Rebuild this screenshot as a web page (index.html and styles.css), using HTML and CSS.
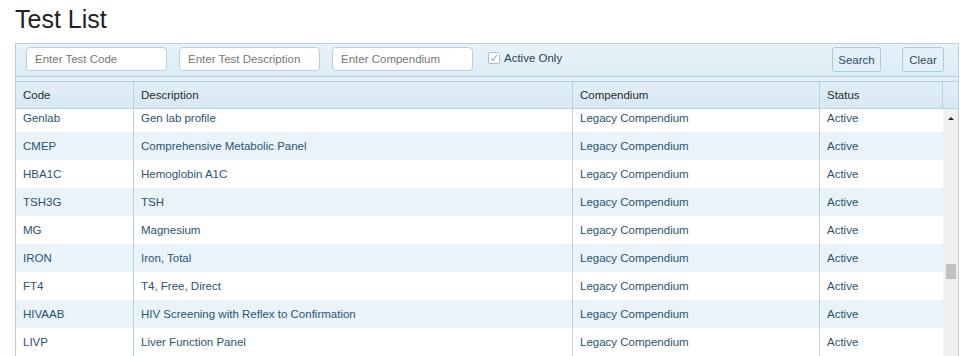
FILE: index.html
```html
<!DOCTYPE html>
<html lang="en">
<head>
  <meta charset="UTF-8">
  <title>Test List</title>
  <link rel="stylesheet" href="styles.css">
</head>
<body>
  <h1>Test List</h1>

  <!-- Test list panel -->
  <div class="panel">
    <div class="toolbar">
      <input class="field" type="text" placeholder="Enter Test Code">
      <input class="field" type="text" placeholder="Enter Test Description">
      <input class="field" type="text" placeholder="Enter Compendium">
      <label class="active-only">
        <svg class="check" width="12" height="12" viewBox="0 0 12 12">
          <rect x="0.5" y="0.5" width="11" height="11" rx="1" fill="#fff" stroke="#a9bfcc"/>
          <path d="M3 6.2 L5 8.8 L9 2.6" fill="none" stroke="#8a9aa5" stroke-width="1"/>
        </svg>
        Active Only
      </label>
      <div class="actions">
        <button class="btn search">Search</button>
        <button class="btn clear">Clear</button>
      </div>
    </div>

    <div class="spacer"></div>

    <!-- Column headers -->
    <div class="head">
      <div class="cell">Code</div>
      <div class="cell">Description</div>
      <div class="cell">Compendium</div>
      <div class="cell">Status</div>
      <div class="cell gutter"></div>
    </div>

    <!-- Rows + scrollbar -->
    <div class="grid-body">
      <div class="rows">
        <div class="row"><div class="cell">Genlab</div><div class="cell">Gen lab profile</div><div class="cell">Legacy Compendium</div><div class="cell">Active</div></div>
        <div class="row alt"><div class="cell">CMEP</div><div class="cell">Comprehensive Metabolic Panel</div><div class="cell">Legacy Compendium</div><div class="cell">Active</div></div>
        <div class="row"><div class="cell">HBA1C</div><div class="cell">Hemoglobin A1C</div><div class="cell">Legacy Compendium</div><div class="cell">Active</div></div>
        <div class="row alt"><div class="cell">TSH3G</div><div class="cell">TSH</div><div class="cell">Legacy Compendium</div><div class="cell">Active</div></div>
        <div class="row"><div class="cell">MG</div><div class="cell">Magnesium</div><div class="cell">Legacy Compendium</div><div class="cell">Active</div></div>
        <div class="row alt"><div class="cell">IRON</div><div class="cell">Iron, Total</div><div class="cell">Legacy Compendium</div><div class="cell">Active</div></div>
        <div class="row"><div class="cell">FT4</div><div class="cell">T4, Free, Direct</div><div class="cell">Legacy Compendium</div><div class="cell">Active</div></div>
        <div class="row alt"><div class="cell">HIVAAB</div><div class="cell">HIV Screening with Reflex to Confirmation</div><div class="cell">Legacy Compendium</div><div class="cell">Active</div></div>
        <div class="row"><div class="cell">LIVP</div><div class="cell">Liver Function Panel</div><div class="cell">Legacy Compendium</div><div class="cell">Active</div></div>
      </div>
      <div class="scrollbar">
        <div class="arrow"></div>
        <div class="thumb"></div>
      </div>
    </div>
  </div>
</body>
</html>
```

FILE: styles.css
```css
/* Page */
html, body {
  overflow: hidden;
}

body {
  margin: 0;
  font-family: "Liberation Sans", Arial, sans-serif;
  font-size: 11.5px;
  color: #333;
  background: #fff;
}

h1 {
  margin: 5px 0 10px 15px;
  font-size: 25px;
  line-height: 28px;
  font-weight: normal;
  color: #222;
}

/* Panel */
.panel {
  margin-left: 15px;
  width: 942px;
  border: 1px solid #b3d3e3;
  border-bottom: none;
  background: #e2eff6;
}

.toolbar {
  display: flex;
  align-items: center;
  height: 32px;
  padding: 0 14px 0 10px;
  background: linear-gradient(#e8f2f8, #deedf5);
  border-bottom: 1px solid #b3d3e3;
}

.field {
  width: 141px;
  height: 24px;
  box-sizing: border-box;
  margin: -2px 12px 0 0;
  padding: 0 8px;
  border: 1px solid #b7d0de;
  border-radius: 4px;
  background: #fff;
  font-family: inherit;
  font-size: 11.5px;
  color: #333;
}

.field::placeholder {
  color: #777;
}

.active-only {
  display: flex;
  align-items: center;
  gap: 4px;
  margin-left: 3px;
  margin-top: -4px;
  color: #2f4050;
  font-size: 11.5px;
}

.actions {
  display: flex;
  gap: 21px;
  margin-left: auto;
}

.btn {
  height: 25px;
  margin-top: -1px;
  padding: 0;
  border: 1px solid #a9cde0;
  border-radius: 3px;
  background: #e4f0f7;
  font-family: inherit;
  font-size: 11.5px;
  color: #2a4d66;
}

.btn.search {
  width: 49px;
}

.btn.clear {
  width: 42px;
}

.spacer {
  height: 4px;
  background: #e4f0f7;
  border-bottom: 1px solid #b3d3e3;
}

/* Grid */
.head {
  display: grid;
  grid-template-columns: 118px 439px 247px 123px 15px;
  height: 26px;
  background: linear-gradient(#e1eef6, #d8e9f3);
  border-bottom: 1px solid #b3d3e3;
  color: #2b2b2b;
}

.cell {
  display: flex;
  align-items: center;
  padding-left: 7px;
  border-right: 1px solid #b3d3e3;
  white-space: nowrap;
  overflow: hidden;
}

.head .gutter {
  border-right: none;
}

.grid-body {
  display: flex;
  height: 250px;
  background: #fff;
}

.rows {
  width: 927px;
  overflow: hidden;
}

.row {
  display: grid;
  grid-template-columns: 118px 439px 247px 123px;
  height: 28px;
  color: #2c5470;
}

.row:first-child {
  margin-top: -5px;
}

.row .cell:last-child {
  border-right: none;
}

.row.alt {
  background: #eaf3f9;
}

.scrollbar {
  width: 15px;
  background: #f0f0f0;
  display: flex;
  flex-direction: column;
  align-items: center;
}

.arrow {
  margin-top: 8px;
  width: 0;
  height: 0;
  border-left: 3px solid transparent;
  border-right: 3px solid transparent;
  border-bottom: 3px solid #222;
}

.thumb {
  margin-top: 144px;
  width: 10px;
  height: 15px;
  background: #c1c1c1;
}
```
